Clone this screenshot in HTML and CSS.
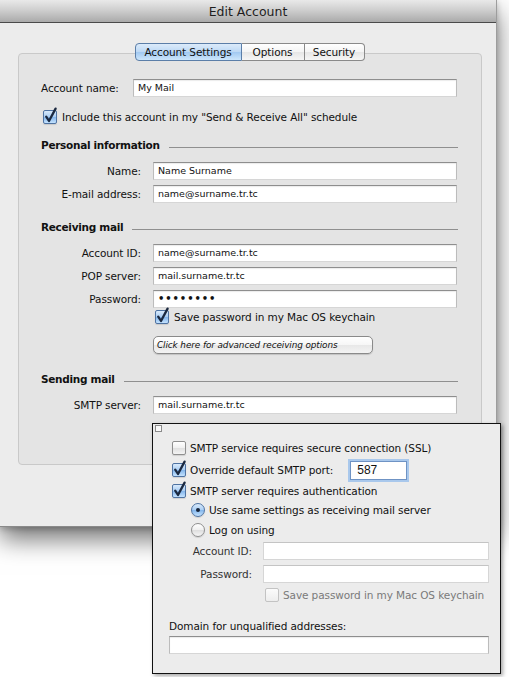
FILE: index.html
```html
<!DOCTYPE html>
<html>
<head>
<meta charset="utf-8">
<title>Edit Account</title>
<link rel="stylesheet" href="styles.css">
</head>
<body>
<div class="window">
  <div class="titlebar">Edit Account</div>
  <div class="content">
    <div class="tabbox">
      <div class="tabs">
        <div class="tab tab-first sel">Account Settings</div>
        <div class="tab tab-mid">Options</div>
        <div class="tab tab-last">Security</div>
      </div>

      <div class="row-name">
        <span class="lbl-left">Account name:</span>
        <div class="field">My Mail</div>
      </div>

      <div class="check-row include">
        <span class="cb on"><svg viewBox="0 0 14 14"><path d="M3.2 6.6 L6 11 L12.6 -1.4" /></svg></span>
        <span>Include this account in my "Send &amp; Receive All" schedule</span>
      </div>

      <div class="heading h-personal"><span>Personal information</span><i class="rule"></i></div>
      <div class="form-row r-first">
        <span class="lbl">Name:</span>
        <div class="field">Name Surname</div>
      </div>
      <div class="form-row">
        <span class="lbl">E-mail address:</span>
        <div class="field">name@surname.tr.tc</div>
      </div>

      <div class="heading h-recv"><span>Receiving mail</span><i class="rule"></i></div>
      <div class="form-row r-first">
        <span class="lbl">Account ID:</span>
        <div class="field">name@surname.tr.tc</div>
      </div>
      <div class="form-row">
        <span class="lbl">POP server:</span>
        <div class="field">mail.surname.tr.tc</div>
      </div>
      <div class="form-row">
        <span class="lbl">Password:</span>
        <div class="field dots">&#8226;&#8226;&#8226;&#8226;&#8226;&#8226;&#8226;&#8226;</div>
      </div>
      <div class="check-row savepw">
        <span class="cb on"><svg viewBox="0 0 14 14"><path d="M3.2 6.6 L6 11 L12.6 -1.4" /></svg></span>
        <span>Save password in my Mac OS keychain</span>
      </div>
      <div class="adv-btn">Click here for advanced receiving options</div>

      <div class="heading h-send"><span>Sending mail</span><i class="rule"></i></div>
      <div class="form-row r-first">
        <span class="lbl">SMTP server:</span>
        <div class="field">mail.surname.tr.tc</div>
      </div>
    </div>
  </div>
</div>

<div class="panel">
  <div class="panel-close"></div>
  <div class="p-row p-ssl">
    <span class="cb"></span>
    <span>SMTP service requires secure connection (SSL)</span>
  </div>
  <div class="p-row p-port">
    <span class="cb on"><svg viewBox="0 0 14 14"><path d="M3.2 6.6 L6 11 L12.6 -1.4" /></svg></span>
    <span class="port-lbl">Override default SMTP port:</span>
    <div class="port-field">587</div>
  </div>
  <div class="p-row p-auth">
    <span class="cb on"><svg viewBox="0 0 14 14"><path d="M3.2 6.6 L6 11 L12.6 -1.4" /></svg></span>
    <span>SMTP server requires authentication</span>
  </div>
  <div class="p-row p-radio1">
    <span class="rb on"></span>
    <span>Use same settings as receiving mail server</span>
  </div>
  <div class="p-row p-radio2">
    <span class="rb"></span>
    <span>Log on using</span>
  </div>
  <div class="p-form p-id">
    <span class="lbl dim">Account ID:</span>
    <div class="field off"></div>
  </div>
  <div class="p-form p-pw">
    <span class="lbl dim">Password:</span>
    <div class="field off"></div>
  </div>
  <div class="p-row p-save">
    <span class="cb off"></span>
    <span class="gray">Save password in my Mac OS keychain</span>
  </div>
  <div class="p-domain">Domain for unqualified addresses:</div>
  <div class="field domain-field"></div>
</div>
</body>
</html>
```
FILE: styles.css
```css
html, body {
  margin: 0;
  padding: 0;
}
body {
  width: 509px;
  height: 677px;
  overflow: hidden;
  background: #ffffff;
  font-family: "DejaVu Sans", "Noto Sans", sans-serif;
  font-size: 10.5px;
  letter-spacing: -0.1px;
  color: #111;
  position: relative;
}

/* ---------- window ---------- */
.window {
  width: 497px;
  height: 527px;
  box-sizing: border-box;
  background: #ececec;
  border-right: 1px solid #9d9d9d;
  border-bottom: 1px solid #8a8a8a;
  box-shadow: 0 12px 24px rgba(0, 0, 0, 0.55), 0 2px 6px rgba(0,0,0,0.2);
  display: flex;
  flex-direction: column;
}
.titlebar {
  height: 23px;
  box-sizing: border-box;
  border-bottom: 1px solid #4a4a4a;
  background: linear-gradient(#e9e9e9, #cfcfcf 45%, #aaaaaa);
  text-align: center;
  font-size: 12.5px;
  letter-spacing: 0;
  line-height: 24px;
  color: #1e1e1e;
}
.content {
  flex: 1;
  padding: 30px 14px 61px 18px;
  display: flex;
  flex-direction: column;
}
.tabbox {
  flex: 1;
  border: 1px solid #c9c9c9;
  border-radius: 4px;
  background: #e4e4e4;
  padding: 0 24px 0 22px;
}

/* ---------- tabs ---------- */
.tabs {
  display: flex;
  justify-content: center;
  margin: -11px 0 0 0;
  padding-left: 1px;
}
.tab {
  height: 18px;
  box-sizing: border-box;
  border: 1px solid #8a8a8a;
  border-left: none;
  background: linear-gradient(#ffffff, #f4f4f4 50%, #e6e6e6 52%, #f6f6f6);
  text-align: center;
  line-height: 16px;
  color: #111;
}
.tab-first {
  width: 107px;
  border-left: 1px solid #5b7ea8;
  border-color: #5b7ea8;
  border-radius: 4px 0 0 4px;
}
.tab.sel {
  background: linear-gradient(#dcebfa, #bcd8f5 50%, #a2c9f1 52%, #cde6fc);
}
.tab-mid { width: 63px; }
.tab-last {
  width: 60px;
  border-radius: 0 4px 4px 0;
}

/* ---------- fields ---------- */
.field {
  height: 18px;
  box-sizing: border-box;
  background: #fff;
  border: 1px solid #bcbcbc;
  border-top-color: #8e8e8e;
  border-bottom-color: #d6d6d6;
  box-shadow: inset 0 1px 1px rgba(0,0,0,0.08);
  padding: 0 4px;
  font-size: 9.5px;
  letter-spacing: 0;
  line-height: 15px;
  color: #111;
  white-space: nowrap;
  overflow: hidden;
}
.field.dots {
  font-weight: bold;
  letter-spacing: 0.9px;
  font-size: 10px;
}
.field.off {
  border-color: #d6d6d6;
  border-top-color: #c4c4c4;
  box-shadow: none;
}

.row-name {
  display: grid;
  grid-template-columns: 92px 1fr;
  align-items: center;
  margin-top: 18px;
}

.form-row {
  display: grid;
  grid-template-columns: 100px 1fr;
  column-gap: 12px;
  align-items: center;
  margin-top: 5px;
}
.form-row.r-first { margin-top: 10px; }
.lbl {
  text-align: right;
  white-space: nowrap;
}
.lbl-left { white-space: nowrap; }

/* ---------- checkboxes ---------- */
.check-row {
  display: flex;
  align-items: center;
  gap: 5px;
  height: 14px;
}
.include { margin: 13px 0 0 2px; }
.savepw { margin: 2px 0 0 114px; }

.cb {
  flex: none;
  width: 14px;
  height: 14px;
  box-sizing: border-box;
  border: 1px solid #8f8f8f;
  border-radius: 2px;
  background: linear-gradient(#ffffff, #f0f0f0 50%, #e0e0e0 52%, #f4f4f4);
  box-shadow: 0 1px 1px rgba(0,0,0,0.12);
  display: block;
}
.cb.on {
  border-color: #4f73a2;
  background: linear-gradient(#d9eafb, #a9cdf3 50%, #84b6ec 52%, #c4e2fe);
}
.cb.off {
  border-color: #c3c3c3;
  background: linear-gradient(#fbfbfb, #ededed);
  box-shadow: none;
}
.cb svg {
  display: block;
  width: 14px;
  height: 14px;
  margin: -1px;
  overflow: visible;
}
.cb svg path {
  fill: none;
  stroke: #1b2940;
  stroke-width: 2.3;
  stroke-linejoin: round;
  stroke-linecap: round;
}

/* ---------- headings ---------- */
.heading {
  display: flex;
  align-items: center;
  height: 14px;
  font-weight: bold;
  letter-spacing: -0.3px;
  font-size: 10.5px;
  color: #111;
}
.heading .rule {
  flex: 1;
  height: 0;
  border-top: 1px solid #8f8f8f;
  margin: 5px 0 0 9px;
  margin-right: -1px;
}
.h-personal { margin-top: 14px; }
.h-recv { margin-top: 17px; }
.h-send { margin-top: 18px; }

/* ---------- button ---------- */
.adv-btn {
  margin: 12px 0 0 112px;
  width: 220px;
  height: 18px;
  box-sizing: border-box;
  border: 1px solid #8a8a8a;
  border-radius: 5px;
  background: linear-gradient(#ffffff, #f6f6f6 50%, #e8e8e8 52%, #f3f3f3);
  box-shadow: 0 1px 1px rgba(0,0,0,0.15);
  font-style: italic;
  font-size: 8.9px;
  letter-spacing: -0.1px;
  line-height: 16px;
  padding-left: 3px;
  color: #111;
  white-space: nowrap;
}

/* ---------- popover panel ---------- */
.panel {
  position: absolute;
  left: 152px;
  top: 423px;
  width: 349px;
  height: 251px;
  box-sizing: border-box;
  border: 1px solid #111;
  background: #ececec;
  box-shadow: 2px 2px 4px rgba(0,0,0,0.35);
}
.panel-close {
  width: 7px;
  height: 7px;
  box-sizing: border-box;
  border: 1px solid #8b8b8b;
  background: #fafafa;
  margin: 1px 0 0 2px;
}
.p-row {
  display: flex;
  align-items: center;
  gap: 4px;
  height: 14px;
  margin-left: 19px;
  white-space: nowrap;
}
.p-ssl { margin-top: 9px; }
.p-port {
  height: 20px;
  margin-top: 5px;
}
.port-lbl { margin-right: 13px; }
.port-field {
  width: 57px;
  height: 19px;
  box-sizing: border-box;
  background: #fff;
  border: 1px solid #6f93c4;
  box-shadow: 0 0 0 2px #a9c8ec;
  font-family: "Liberation Sans", sans-serif;
  font-size: 12px;
  letter-spacing: 0;
  line-height: 17px;
  padding-left: 6px;
}
.p-auth { margin-top: 4px; }
.p-radio1 { margin: 5px 0 0 38px; }
.p-radio2 { margin: 6px 0 0 38px; }

.rb {
  flex: none;
  width: 14px;
  height: 14px;
  box-sizing: border-box;
  border: 1px solid #8f8f8f;
  border-radius: 50%;
  background: linear-gradient(#ffffff, #efefef 50%, #dedede 52%, #f5f5f5);
  box-shadow: 0 1px 1px rgba(0,0,0,0.12);
  display: flex;
  align-items: center;
  justify-content: center;
}
.rb.on {
  border-color: #4f73a2;
  background: linear-gradient(#d9eafb, #a9cdf3 50%, #84b6ec 52%, #c4e2fe);
}
.rb.on::after {
  content: "";
  width: 4px;
  height: 4px;
  border-radius: 50%;
  background: #16243a;
}

.p-form {
  display: grid;
  grid-template-columns: 99px 226px;
  column-gap: 11px;
  align-items: center;
  margin-top: 5px;
}
.dim { color: #333; }
.p-save { margin: 5px 0 0 112px; }
.gray { color: #7a7a7a; }
.p-domain {
  margin: 17px 0 0 16px;
  height: 14px;
  line-height: 14px;
  white-space: nowrap;
}
.domain-field {
  margin: 3px 0 0 16px;
  width: 320px;
}
```
